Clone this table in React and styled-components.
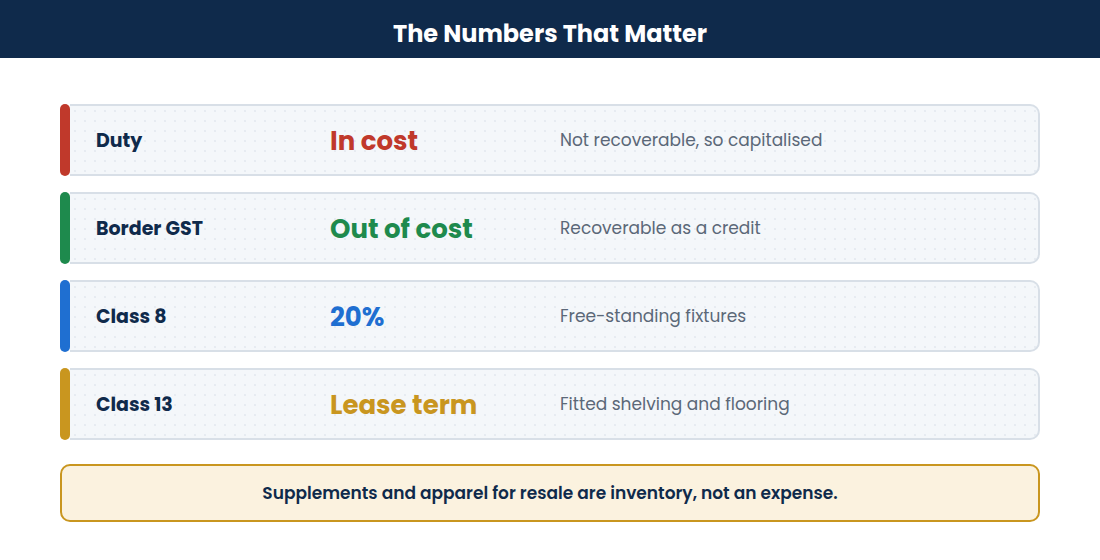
import React from "react";
import styled, { createGlobalStyle } from "styled-components";

const Global = createGlobalStyle`
  html, body { margin: 0; padding: 0; background: #ffffff; }
  body { font-family: "Poppins", Inter, "Noto Sans", sans-serif; }
`;

const Header = styled.header`
  height: 58px;
  box-sizing: border-box;
  padding-top: 8px;
  background: #0f2a4b;
  display: flex;
  align-items: center;
  justify-content: center;
  color: #ffffff;
  font-size: 24px;
  font-weight: 700;
`;

const Main = styled.main`
  padding: 46px 60px 0 60px;
  display: flex;
  flex-direction: column;
`;

const List = styled.div`
  display: flex;
  flex-direction: column;
  gap: 16px;
`;

const Row = styled.div`
  display: flex;
  height: 72px;
`;

const Accent = styled.div`
  width: 10px;
  flex: 0 0 10px;
  border-radius: 5px;
  background: ${(p) => p.$color};
`;

const Body = styled.div`
  flex: 1;
  display: grid;
  grid-template-columns: 234px 230px 1fr;
  align-items: center;
  padding-left: 26px;
  border: 2px solid #d8dfe7;
  border-left: none;
  border-radius: 0 10px 10px 0;
  background-color: #f4f7fa;
  background-image: radial-gradient(circle, #e6ebf1 0.7px, transparent 1px);
  background-size: 10px 10px;
`;

const Label = styled.div`
  font-size: 19px;
  font-weight: 700;
  color: #0f2a4b;
`;

const Value = styled.div`
  font-size: 26px;
  font-weight: 700;
  color: ${(p) => p.$color};
  padding-top: 2px;
`;

const Desc = styled.div`
  font-size: 17px;
  font-weight: 400;
  color: #5b6878;
`;

const Note = styled.div`
  margin-top: 24px;
  height: 58px;
  box-sizing: border-box;
  border: 2px solid #c9961f;
  border-radius: 10px;
  background: #fbf2df;
  display: flex;
  align-items: center;
  justify-content: center;
  font-size: 17px;
  font-weight: 600;
  color: #0f2a4b;
`;

const rows = [
  { label: "Duty", value: "In cost", desc: "Not recoverable, so capitalised", color: "#c0392b" },
  { label: "Border GST", value: "Out of cost", desc: "Recoverable as a credit", color: "#1e8a4d" },
  { label: "Class 8", value: "20%", desc: "Free-standing fixtures", color: "#1f6fd1" },
  { label: "Class 13", value: "Lease term", desc: "Fitted shelving and flooring", color: "#c9961f" },
];

export default function App() {
  return (
    <>
      <Global />
      <Header>The Numbers That Matter</Header>
      <Main>
        <List>
          {rows.map((r) => (
            <Row key={r.label}>
              <Accent $color={r.color} />
              <Body>
                <Label>{r.label}</Label>
                <Value $color={r.color}>{r.value}</Value>
                <Desc>{r.desc}</Desc>
              </Body>
            </Row>
          ))}
        </List>
        <Note>Supplements and apparel for resale are inventory, not an expense.</Note>
      </Main>
    </>
  );
}
